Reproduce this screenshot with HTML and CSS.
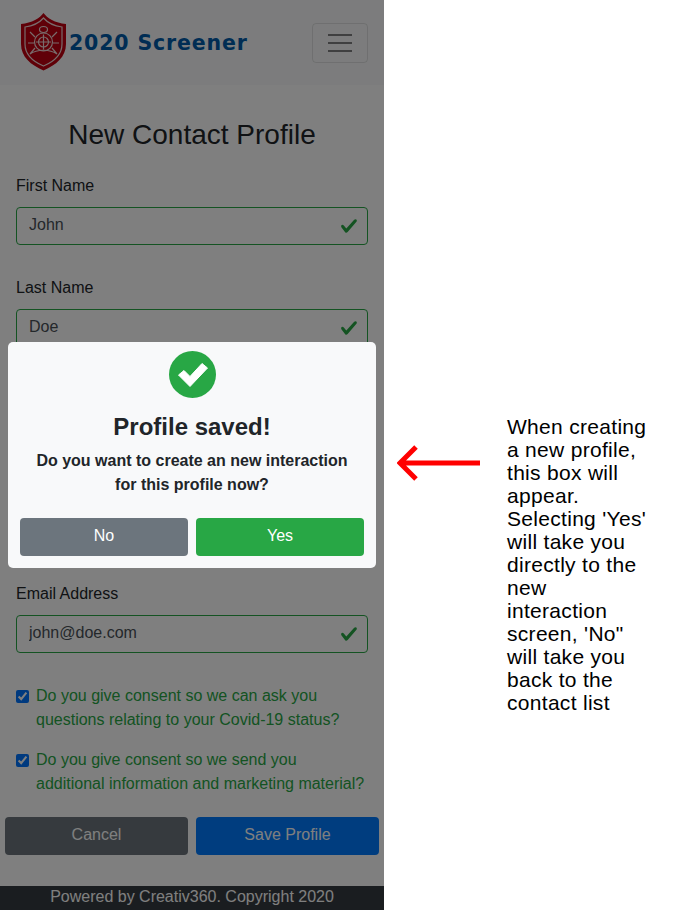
FILE: index.html
```html
<!DOCTYPE html>
<html lang="en">
<head>
<meta charset="utf-8">
<title>2020 Screener</title>
<link rel="stylesheet" href="styles.css">
</head>
<body>
<div class="stage">
  <div class="phone">
    <nav class="navbar">
      <div class="brand">
        <svg class="logo" viewBox="0 0 46 58" width="46" height="58" aria-hidden="true">
          <path class="logo-shield" d="M22.5 0 C26 5 34 10 45 11 L45 31 C45 44 35 52 22.5 57.500 C10 52 0 44 0 31 L0 11 C11 10 19 5 22.500 0Z"/>
          <path class="logo-line" d="M22.500 5 C26 9 33 13 41 14 L41 31 C41 42 32 49 22.500 53 C13 49 4 42 4 31 L4 14 C12 13 19 9 22.500 5Z"/>
          <ellipse class="logo-line" cx="22.500" cy="16.500" rx="4" ry="3"/>
          <circle class="logo-line" cx="22.500" cy="29" r="9"/>
          <circle class="logo-line" cx="22.500" cy="29" r="5"/>
          <path class="logo-line" d="M22.500 21.500 V36.500 M15 29 H30 M14 24 L9 19 M31 24 L36 19 M13 30 H7 M32 30 H38 M14 35 L9 41 M31 35 L36 41 M9 41 C16 36 29 36 36 41"/>
        </svg>
        <span class="brand-name">2020 Screener</span>
      </div>
      <button class="toggler" type="button" aria-label="Menu">
        <svg viewBox="0 0 24 18" width="24" height="18" aria-hidden="true"><path d="M0 1 H24 M0 9 H24 M0 17 H24"/></svg>
      </button>
    </nav>

    <main class="content">
      <h1 class="title">New Contact Profile</h1>
      <form class="profile">
        <div class="group"><label class="label">First Name</label><div class="field"><input class="input" value="John" readonly><svg class="tick" viewBox="0 0 8 8"><path d="M2.300 6.730L.6 4.530c-.4-1.040.46-1.400 1.100-.8l1.100 1.400 3.400-3.800c.6-.63 1.600-.27 1.200.7l-4 4.600c-.43.5-.8.4-1.100.1z"/></svg></div></div>
        <div class="group"><label class="label">Last Name</label><div class="field"><input class="input" value="Doe" readonly><svg class="tick" viewBox="0 0 8 8"><path d="M2.300 6.730L.6 4.530c-.4-1.040.46-1.400 1.100-.8l1.100 1.400 3.400-3.800c.6-.63 1.600-.27 1.200.7l-4 4.600c-.43.5-.8.4-1.100.1z"/></svg></div></div>
        <div class="group"><label class="label">Company</label><div class="field"><input class="input" readonly></div></div>
        <div class="group"><label class="label">Phone Number</label><div class="field"><input class="input" readonly></div></div>
        <div class="group"><label class="label">Email Address</label><div class="field"><input class="input" value="john@doe.com" readonly><svg class="tick" viewBox="0 0 8 8"><path d="M2.300 6.730L.6 4.530c-.4-1.040.46-1.400 1.100-.8l1.100 1.400 3.400-3.800c.6-.63 1.600-.27 1.200.7l-4 4.600c-.43.5-.8.4-1.100.1z"/></svg></div></div>
        <label class="consent"><input class="check" type="checkbox" checked><span>Do you give consent so we can ask you questions relating to your Covid-19 status?</span></label>
        <label class="consent"><input class="check" type="checkbox" checked><span>Do you give consent so we send you additional information and marketing material?</span></label>
        <div class="actions">
          <button class="btn btn-dark" type="button">Cancel</button>
          <button class="btn btn-blue" type="button">Save Profile</button>
        </div>
      </form>
    </main>

    <footer class="footer">Powered by Creativ360. Copyright 2020</footer>

    <div class="backdrop"></div>
    <div class="modal">
      <svg class="modal-icon" viewBox="0 0 47 47" width="47" height="47" aria-hidden="true">
        <circle class="modal-disc" cx="23.500" cy="23.500" r="23.500"/>
        <path class="modal-check" d="M9.500 24 L15 19.500 L21 25.500 L33 12.500 L38.500 17 L21 35.500 Z"/>
      </svg>
      <h2 class="modal-title">Profile saved!</h2>
      <p class="modal-text">Do you want to create an new interaction<br>for this profile now?</p>
      <div class="modal-actions">
        <button class="btn btn-gray" type="button">No</button>
        <button class="btn btn-green" type="button">Yes</button>
      </div>
    </div>
  </div>

  <aside class="note">
    <svg class="arrow" viewBox="0 0 84 36" width="84" height="36" aria-hidden="true">
      <path d="M83 18 H5 M19 2 L3 18 L19 34"/>
    </svg>
    <p class="note-text">When creating a new profile, this box will appear. Selecting 'Yes' will take you directly to the new interaction screen, 'No" will take you back to the contact list</p>
  </aside>
</div>
</body>
</html>
```

FILE: styles.css
```css
* { box-sizing: border-box; }

html, body { margin: 0; padding: 0; background: #fff; }

body {
  font-family: "Liberation Sans", Arial, sans-serif;
  font-size: 16px;
  line-height: 24px;
  color: #212529;
}

.stage { display: flex; width: 686px; height: 910px; overflow: hidden; }

.phone {
  position: relative;
  width: 384px;
  height: 910px;
  flex: none;
  display: flex;
  flex-direction: column;
  background: #fff;
}

.navbar {
  height: 85px;
  flex: none;
  display: flex;
  align-items: center;
  justify-content: space-between;
  padding: 0 16px 0 21px;
  background: #f8f9fa;
}

.brand { display: flex; align-items: center; gap: 2px; margin-top: -1px; }

.logo { flex: none; display: block; }
.logo-shield { fill: #c00010; }
.logo-line { fill: none; stroke: #f0d8d8; stroke-width: 1.200; }

.brand-name {
  margin-top: 2px;
  font-family: "DejaVu Sans", sans-serif;
  font-weight: 700;
  font-size: 20.500px;
  line-height: 24px;
  letter-spacing: 0.850px;
  color: #005aa8;
  white-space: nowrap;
}

.toggler {
  width: 56px;
  height: 40px;
  padding: 0;
  display: flex;
  align-items: center;
  justify-content: center;
  background: transparent;
  border: 1px solid rgba(0, 0, 0, 0.1);
  border-radius: 4px;
}
.toggler path { fill: none; stroke: #7f7f80; stroke-width: 2; }

.content { flex: 1; padding: 33px 16px 0; }

.title {
  margin: 0 0 22px;
  font-size: 28px;
  font-weight: 400;
  line-height: 34px;
  text-align: center;
}

.group { margin-bottom: 31px; }

.label { display: block; margin-bottom: 9px; }

.field { position: relative; }

.input {
  display: block;
  width: 100%;
  height: 38px;
  padding: 5px 36px 7px 12px;
  font: inherit;
  color: #495057;
  background: #fff;
  border: 1px solid #28a745;
  border-radius: 4px;
  outline: none;
}

.tick {
  position: absolute;
  top: 10px;
  right: 10px;
  width: 18px;
  height: 18px;
  fill: #28a745;
}

.consent {
  display: flex;
  align-items: flex-start;
  gap: 7px;
  margin-bottom: 16px;
  color: #28a745;
}

.check { flex: none; width: 13px; height: 13px; margin: 6px 0 0; }

.actions {
  display: grid;
  grid-template-columns: 1fr 1fr;
  gap: 8px;
  margin: 21px -11px 0;
}

.btn {
  height: 38px;
  padding: 0 0 2px;
  font: inherit;
  color: #fff;
  border: 0;
  border-radius: 4px;
}
.btn-dark { background: #6c757d; }
.btn-blue { background: #007bff; }
.btn-gray { background: #6c757d; }
.btn-green { background: #28a745; }

.footer {
  height: 24px;
  flex: none;
  background: #343a40;
  color: #fff;
  text-align: center;
  line-height: 22px;
}

.backdrop {
  position: absolute;
  inset: 0;
  background: rgba(0, 0, 0, 0.5);
}

.modal {
  position: absolute;
  left: 8px;
  top: 342px;
  width: 368px;
  height: 226px;
  padding: 9px 12px 12px;
  display: flex;
  flex-direction: column;
  align-items: center;
  background: #f8f9fa;
  border-radius: 5px;
}

.modal-icon { flex: none; display: block; }
.modal-disc { fill: #28a745; }
.modal-check { fill: #fff; stroke: #fff; stroke-width: 1; stroke-linejoin: round; }

.modal-title {
  margin: 14px 0 0;
  font-size: 24px;
  font-weight: 700;
  line-height: 29px;
}

.modal-text {
  margin: 8px 0 0;
  font-size: 16px;
  font-weight: 700;
  line-height: 24px;
  text-align: center;
}

.modal-actions {
  display: grid;
  grid-template-columns: 1fr 1fr;
  gap: 8px;
  width: 100%;
  margin-top: auto;
}

.note {
  flex: 1;
  display: flex;
  align-items: flex-start;
  gap: 26px;
  padding: 415px 0 0 13px;
}

.arrow { flex: none; margin-top: 30px; }
.arrow path { fill: none; stroke: #ff0000; stroke-width: 5; }

.note-text {
  width: 143px;
  margin: 0;
  font-size: 21px;
  line-height: 23px;
  letter-spacing: 0.300px;
  color: #000;
}
```
